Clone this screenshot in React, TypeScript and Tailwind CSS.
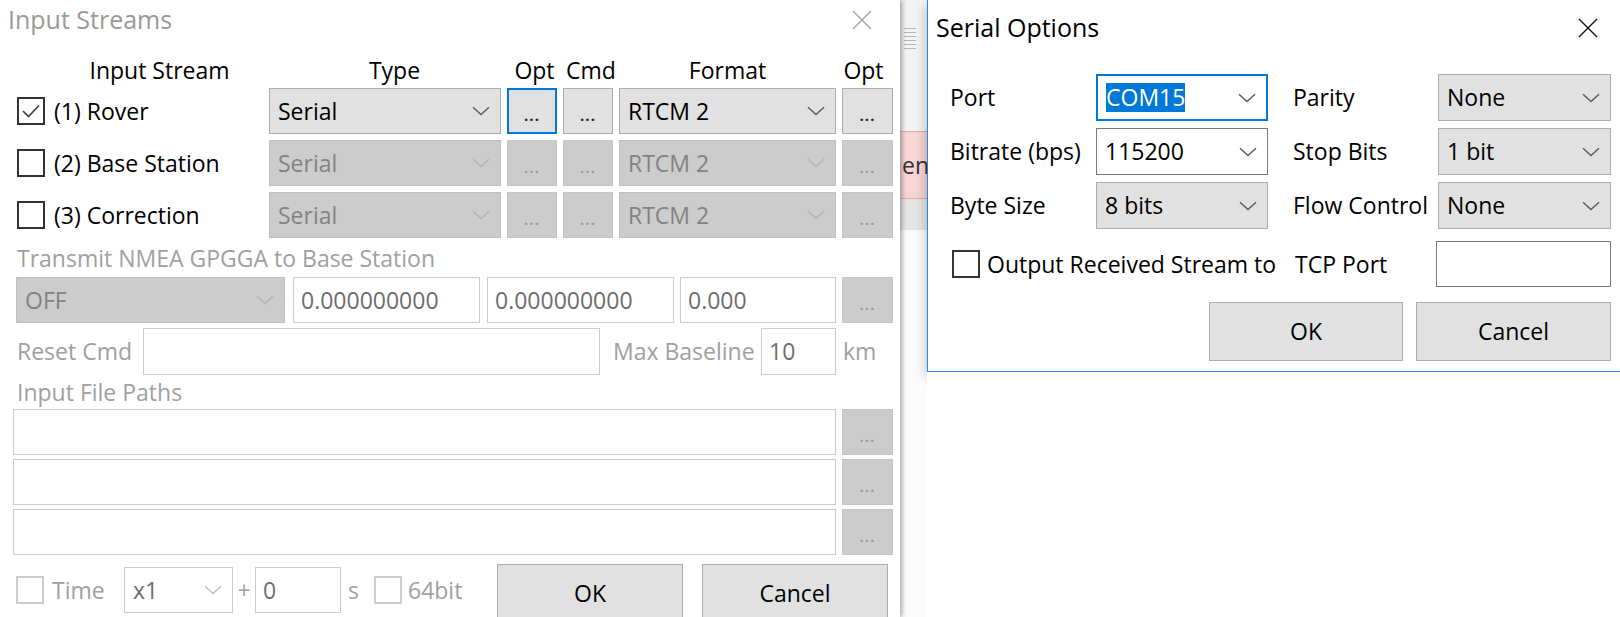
import React from 'react';

const F = "font-['Open_Sans','Noto_Sans',sans-serif]";

type V = 'enabled' | 'disabled' | 'white' | 'focus' | 'whiteDis';

const comboCls: Record<V, string> = {
  enabled: 'bg-[#e1e1e1] border border-[#adadad] text-black',
  disabled: 'bg-[#cccccc] border border-[#bfbfbf] text-[#838383]',
  white: 'bg-white border border-[#7a7a7a] text-black',
  focus: 'bg-white border-2 border-[#0078d7] text-black',
  whiteDis: 'bg-white border border-[#cccccc] text-[#6d6d6d]',
};
const chevC: Record<V, string> = {
  enabled: '#5a5a5a',
  disabled: '#b3b3b3',
  white: '#5a5a5a',
  focus: '#5a5a5a',
  whiteDis: '#bdbdbd',
};

function Chevron({ c }: { c: string }) {
  return (
    <svg width="18" height="10" viewBox="0 0 18 10" className="shrink-0">
      <path d="M1 1.2 L9 8.6 L17 1.2" fill="none" stroke={c} strokeWidth="1.4" />
    </svg>
  );
}

function Combo({ v, variant, className = '', children }: { v?: string; variant: V; className?: string; children?: React.ReactNode }) {
  return (
    <div className={`flex items-center justify-between pl-[8px] pr-[10px] shrink-0 ${comboCls[variant]} ${className}`}>
      <span className="whitespace-nowrap">{children ?? v}</span>
      <Chevron c={chevC[variant]} />
    </div>
  );
}

function Dots({ variant, className = '' }: { variant: 'enabled' | 'focus' | 'disabled'; className?: string }) {
  const cls =
    variant === 'enabled'
      ? 'bg-[#e1e1e1] border border-[#adadad] text-[#222]'
      : variant === 'focus'
      ? 'bg-[#e1e1e1] border-2 border-[#0078d7] text-[#222]'
      : 'bg-[#cccccc] border border-[#c4c4c4] text-[#9a9a9a]';
  return (
    <div className={`flex items-center justify-center shrink-0 ${cls} ${className}`}>
      <span className="text-[15px] font-bold tracking-[1px] leading-none pt-[8px]">...</span>
    </div>
  );
}

function Check({ checked = false, disabled = false }: { checked?: boolean; disabled?: boolean }) {
  return (
    <div
      className={`w-[28px] h-[28px] shrink-0 flex items-center justify-center bg-white border-2 ${
        disabled ? 'border-[#cccccc]' : 'border-[#333333]'
      }`}
    >
      {checked && (
        <svg width="20" height="16" viewBox="0 0 20 16">
          <path d="M2 8 L7.5 13.5 L18 2.5" fill="none" stroke="#3c3c3c" strokeWidth="1.6" />
        </svg>
      )}
    </div>
  );
}

function Field({ v = '', className = '', dark = false }: { v?: string; className?: string; dark?: boolean }) {
  return (
    <div
      className={`flex items-center pl-[7px] shrink-0 bg-white border ${
        dark ? 'border-[#7a7a7a] text-black' : 'border-[#cccccc] text-[#6d6d6d]'
      } ${className}`}
    >
      <span className="whitespace-nowrap">{v}</span>
    </div>
  );
}

function Btn({ label, className = '' }: { label: string; className?: string }) {
  return (
    <div className={`flex items-center justify-center shrink-0 bg-[#e1e1e1] border border-[#adadad] text-black ${className}`}>
      {label}
    </div>
  );
}

function CloseX({ c, w }: { c: string; w: number }) {
  return (
    <svg width="20" height="20" viewBox="0 0 20 20" className="shrink-0">
      <path d="M1 1 L19 19 M19 1 L1 19" stroke={c} strokeWidth={w} fill="none" />
    </svg>
  );
}

function LeftWindow() {
  const rows: { label: string; checked: boolean; en: boolean }[] = [
    { label: '(1) Rover', checked: true, en: true },
    { label: '(2) Base Station', checked: false, en: false },
    { label: '(3) Correction', checked: false, en: false },
  ];
  return (
    <div className="relative z-10 w-[900px] h-full shrink-0 overflow-hidden bg-white shadow-[2px_0_5px_rgba(0,0,0,0.35)] flex flex-col text-[23px]">
      {/* title bar */}
      <div className="shrink-0 h-[40px] flex items-center justify-between pl-[8px] pr-[28px]">
        <span className="text-[25px] text-[#999999]">Input Streams</span>
        <CloseX c="#a0a0a0" w={1.3} />
      </div>
      {/* header */}
      <div className="shrink-0 mt-[12px] h-[36px] flex items-center pl-[17px] gap-[6px] text-black whitespace-nowrap">
        <div className="w-[246px] pl-[39px] flex justify-center">Input Stream</div>
        <div className="w-[232px] pl-[19px] flex justify-center">Type</div>
        <div className="w-[50px] pl-[5px] flex justify-center">Opt</div>
        <div className="w-[50px] pl-[6px] flex justify-center">Cmd</div>
        <div className="w-[217px] flex justify-center">Format</div>
        <div className="w-[51px] pr-[8px] flex justify-center">Opt</div>
      </div>
      {/* stream rows */}
      <div className="shrink-0 flex flex-col gap-[6px]">
        {rows.map((r, i) => (
          <div key={i} className="h-[46px] flex items-center pl-[17px] gap-[6px]">
            <div className="w-[246px] flex items-center gap-[9px] text-black whitespace-nowrap">
              <Check checked={r.checked} />
              <span>{r.label}</span>
            </div>
            <Combo v="Serial" variant={r.en ? 'enabled' : 'disabled'} className="w-[232px] h-full" />
            <Dots variant={r.en ? 'focus' : 'disabled'} className="w-[50px] h-full" />
            <Dots variant={r.en ? 'enabled' : 'disabled'} className="w-[50px] h-full" />
            <Combo v="RTCM 2" variant={r.en ? 'enabled' : 'disabled'} className="w-[217px] h-full" />
            <Dots variant={r.en ? 'enabled' : 'disabled'} className="w-[51px] h-full" />
          </div>
        ))}
      </div>
      {/* transmit */}
      <div className="shrink-0 h-[39px] flex items-center pl-[17px] pt-[1px] text-[#a0a0a0] whitespace-nowrap">
        Transmit NMEA GPGGA to Base Station
      </div>
      <div className="shrink-0 h-[46px] flex items-center pl-[16px]">
        <Combo v="OFF" variant="disabled" className="w-[269px] h-full" />
        <Field v="0.000000000" className="ml-[8px] w-[187px] h-full" />
        <Field v="0.000000000" className="ml-[7px] w-[187px] h-full" />
        <Field v="0.000" className="ml-[6px] w-[156px] h-full" />
        <Dots variant="disabled" className="ml-[6px] w-[51px] h-full" />
      </div>
      {/* reset cmd */}
      <div className="shrink-0 mt-[5px] h-[47px] flex items-center pl-[17px] text-[#a0a0a0] whitespace-nowrap">
        <span className="w-[126px] shrink-0">Reset Cmd</span>
        <Field className="w-[457px] h-full" />
        <span className="ml-[13px] w-[148px] shrink-0">Max Baseline</span>
        <Field v="10" className="w-[75px] h-full" />
        <span className="ml-[7px]">km</span>
      </div>
      <div className="shrink-0 h-[34px] flex items-center pl-[17px] text-[#a0a0a0] whitespace-nowrap">Input File Paths</div>
      <div className="shrink-0 flex flex-col gap-[4px]">
        {[0, 1, 2].map((i) => (
          <div key={i} className="h-[46px] flex items-center pl-[13px]">
            <Field className="w-[823px] h-full" />
            <Dots variant="disabled" className="ml-[6px] w-[51px] h-full" />
          </div>
        ))}
      </div>
      {/* bottom row */}
      <div className="shrink-0 mt-[9px] flex items-start pl-[16px] text-[#a0a0a0] whitespace-nowrap">
        <div className="mt-[12px]">
          <Check disabled />
        </div>
        <span className="ml-[8px] w-[72px] mt-[9px]">Time</span>
        <Combo v="x1" variant="whiteDis" className="mt-[3px] w-[109px] h-[46px]" />
        <span className="w-[22px] text-center mt-[9px]">+</span>
        <Field v="0" className="mt-[3px] w-[86px] h-[46px]" />
        <span className="w-[33px] pl-[7px] mt-[9px]">s</span>
        <div className="mt-[12px]">
          <Check disabled />
        </div>
        <span className="ml-[6px] w-[89px] mt-[9px]">64bit</span>
        <Btn label="OK" className="w-[186px] h-[58px]" />
        <Btn label="Cancel" className="ml-[19px] w-[186px] h-[58px]" />
      </div>
    </div>
  );
}

function Strip() {
  return (
    <div className="w-[27px] h-full shrink-0 flex flex-col bg-white overflow-hidden">
      <div className="shrink-0 h-[131px] bg-[#f4f4f4] pl-[4px] pt-[28px] flex flex-col gap-[3px]">
        {[0, 1, 2, 3, 4, 5].map((i) => (
          <div key={i} className="w-[12px] h-[1px] bg-[#b8b8b8]" />
        ))}
      </div>
      <div className="shrink-0 h-[68px] bg-[#f6d6d6] border-y border-[#e6a8a8] flex items-center pl-[2px] text-[23px] text-[#333] whitespace-nowrap">
        en
      </div>
      <div className="shrink-0 h-[31px] bg-[#e4e4e4]" />
      <div className="flex-1 bg-[#fbfbfb]" />
    </div>
  );
}

function SerialWindow() {
  const rows: { l1: string; c1: React.ReactNode; v1: V; l2: string; c2: string }[] = [
    {
      l1: 'Port',
      c1: <span className="bg-[#0078d7] text-white h-[29px] leading-[29px] inline-block">COM15</span>,
      v1: 'focus',
      l2: 'Parity',
      c2: 'None',
    },
    { l1: 'Bitrate (bps)', c1: '115200', v1: 'white', l2: 'Stop Bits', c2: '1 bit' },
    { l1: 'Byte Size', c1: '8 bits', v1: 'enabled', l2: 'Flow Control', c2: 'None' },
  ];
  return (
    <div className="w-[700px] h-[372px] shrink-0 overflow-hidden bg-white border-l border-b border-[#2b88d8] shadow-[0_4px_12px_rgba(0,0,0,0.28)] flex flex-col text-[23px] text-black">
      <div className="shrink-0 h-[56px] flex items-center pl-[8px]">
        <span className="text-[25px] w-[642px]">Serial Options</span>
        <CloseX c="#111111" w={1.4} />
      </div>
      <div className="shrink-0 mt-[18px] flex flex-col gap-[7px]">
        {rows.map((r, i) => (
          <div key={i} className="h-[47px] flex items-center pl-[22px] whitespace-nowrap">
            <span className="w-[146px] shrink-0">{r.l1}</span>
            <Combo variant={r.v1} className={`w-[172px] h-full ${i === 0 ? 'pl-[5px]' : ''}`}>
              {r.c1}
            </Combo>
            <span className="ml-[25px] w-[145px] shrink-0">{r.l2}</span>
            <Combo v={r.c2} variant="enabled" className="w-[173px] h-full" />
          </div>
        ))}
      </div>
      <div className="shrink-0 mt-[12px] h-[46px] flex items-center pl-[24px] whitespace-nowrap">
        <Check />
        <span className="ml-[7px] w-[308px] shrink-0">Output Received Stream to</span>
        <span className="w-[141px] shrink-0">TCP Port</span>
        <Field dark className="w-[175px] h-full" />
      </div>
      <div className="shrink-0 mt-[15px] flex items-center pl-[281px]">
        <Btn label="OK" className="w-[194px] h-[59px]" />
        <Btn label="Cancel" className="ml-[13px] w-[195px] h-[59px]" />
      </div>
    </div>
  );
}

export default function App() {
  return (
    <div className={`${F} w-[1620px] h-[617px] overflow-hidden flex bg-white`}>
      <LeftWindow />
      <Strip />
      <div className="flex-1 min-w-0 flex flex-col">
        <SerialWindow />
        <div className="flex-1 bg-white" />
      </div>
    </div>
  );
}
